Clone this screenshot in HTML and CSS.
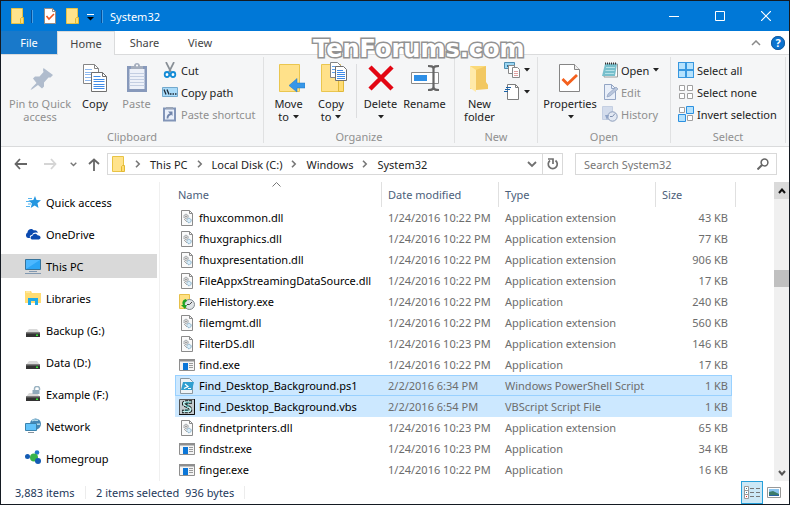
FILE: index.html
```html
<!DOCTYPE html>
<html lang="en">
<head>
<meta charset="utf-8">
<title>System32</title>
<link rel="stylesheet" href="styles.css">
</head>
<body>
<svg class="defs" aria-hidden="true">
  <symbol id="folder" viewBox="0 0 14 16">
    <path d="M.5.5h11v15H.5z" fill="#ffe38c" stroke="#e8c344"/>
    <path d="M10.500 9.500h2v6h-3v-5z" fill="#ffdc72" stroke="#e2b932"/>
  </symbol>
  <symbol id="dll" viewBox="0 0 16 16">
    <path d="M2.500.5h8l3 3v12h-11z" fill="#fafafa" stroke="#8b8b8b"/>
    <path d="M10.500.5v3h3" fill="none" stroke="#8b8b8b"/>
    <circle cx="7" cy="6.500" r="2.200" fill="#ddd" stroke="#858d93" stroke-dasharray="1 .6"/>
    <circle cx="10" cy="10.500" r="2.200" fill="#d9ecf7" stroke="#6f9dba" stroke-dasharray="1 .6"/>
    <circle cx="7" cy="6.500" r=".7" fill="#777"/>
    <path d="M5 9l3 3" stroke="#aaa"/>
  </symbol>
  <symbol id="exe" viewBox="0 0 16 16">
    <path d="M.5 2.500h15v11H.5z" fill="#f4f4f4" stroke="#8e8e8e"/>
    <path d="M0 2h16v2.500H0z" fill="#8e8e8e"/>
    <path d="M4 6h5v7H4z" fill="#0b76d8"/>
    <path d="M10 6.500h4M10 8.500h4M10 10.500h4" stroke="#9a9a9a"/>
  </symbol>
  <symbol id="drive" viewBox="0 0 16 16">
    <path d="M4 7h8l3 4H1z" fill="#d9d9d9"/>
    <path d="M1 10.500h14v4.500H1z" fill="#333"/>
    <path d="M1 10.500h14v1H1z" fill="#777"/>
    <path d="M11 12.500h2v1.500h-2z" fill="#39e639"/>
  </symbol>
  <symbol id="down" viewBox="0 0 6 4"><path d="M0 0h6L3 3.500z" fill="#222"/></symbol>
  <symbol id="chev" viewBox="0 0 6 8"><path d="M1 .8L4.200 4 1 7.200" fill="none" stroke="#777" stroke-width="1.600"/></symbol>
</svg>

<main class="window">
  <header class="titlebar">
    <svg class="tb-folder" width="14" height="16"><use href="#folder"/></svg>
    <i class="tb-sep"></i>
    <svg class="tb-check" width="12" height="16" viewBox="0 0 12 16"><path d="M.5.5h8l3 3v12H.5z" fill="#fff" stroke="#9a8d84"/><path d="M8.500.5v3h3" fill="none" stroke="#9a8d84"/><path d="M2.500 8l2.500 3 5-5" fill="none" stroke="#f0541e" stroke-width="1.600"/></svg>
    <svg class="tb-folder" width="14" height="16"><use href="#folder"/></svg>
    <svg class="tb-more" width="7" height="7" viewBox="0 0 7 7"><path d="M0 .5h7" stroke="#fff"/><path d="M0 3h7L3.500 6.500z" fill="#000"/></svg>
    <i class="tb-sep"></i>
    <h1 class="title">System32</h1>
    <div class="caption">
      <button aria-label="Minimize"><svg width="10" height="10"><path d="M0 5.500h10" stroke="#fff"/></svg></button>
      <button aria-label="Maximize"><svg width="10" height="10"><path d="M.5.5h9v9h-9z" fill="none" stroke="#fff"/></svg></button>
      <button aria-label="Close"><svg width="10" height="10"><path d="M0 0l10 10M10 0L0 10" stroke="#fff" stroke-width="1.200"/></svg></button>
    </div>
  </header>

  <nav class="tabs">
    <button class="tab tab-file">File</button>
    <button class="tab tab-home">Home</button>
    <button class="tab">Share</button>
    <button class="tab">View</button>
    <div class="tabs-end">
      <button aria-label="Minimize the Ribbon"><svg width="10" height="6"><path d="M1 5l4-4 4 4" fill="none" stroke="#8a8a8a" stroke-width="1.500"/></svg></button>
      <button class="help" aria-label="Help">?</button>
    </div>
    <div class="watermark">TenForums.com</div>
  </nav>

  <section class="ribbon">
    <div class="group g-clipboard">
      <div class="tools">
        <button class="big off w-pin">
          <svg width="32" height="32" viewBox="0 0 32 32"><path d="M19.500 6L29 13l-2.500 2.500-2 0-4.500 5v4L18 26.500l-4-3.500L8.500 27 6.500 28 8 25.500 12.500 21 9 16.500l2-2h4.500l4-4.500-.5-2z" fill="#b0bccd"/></svg>
          <span>Pin to Quick<br>access</span></button>
        <button class="big w-copy">
          <svg width="32" height="32" viewBox="0 0 32 32"><g fill="#fff" stroke="#858585"><path d="M4.500 2.500h11l4 4v15h-15z"/><path d="M15.500 2.500v4h4" fill="none"/></g><path d="M6 7.500h7M6 10.500h11M6 12.500h11M6 15.500h11M6 18.500h11" stroke="#8db8ef"/><g fill="#fff" stroke="#707070"><path d="M12.500 10.500h11l4 4v15h-15z"/><path d="M23.500 10.500v4h4" fill="none"/></g><path d="M14.500 14.500h7M14.500 17.500h11M14.500 19.500h11M14.500 22.500h11M14.500 24.500h11M14.500 26.500h11" stroke="#3f8be8"/></svg>
          <span>Copy</span></button>
        <button class="big off w-paste">
          <svg width="32" height="32" viewBox="0 0 32 32"><path d="M6 4h20v26H6z" fill="#8799bb"/><path d="M8.500 7h15v20h-15z" fill="#edf1f9"/><path d="M8.500 11.500h15M8.500 14.500h15M8.500 17.500h15M8.500 20.500h15M8.500 23.500h15" stroke="#c3cee2"/><path d="M10 7V4h3c0-4 6-4 6 0h3v3z" fill="#a5aebd"/><circle cx="16" cy="3.500" r="1" fill="#fff"/></svg>
          <span>Paste</span></button>
        <div class="smalls">
          <button class="small"><svg width="16" height="16" viewBox="0 0 16 16"><path d="M4 0l5 10M12 0L7 10" stroke="#888f96" stroke-width="1.700"/><g fill="#fff" stroke="#138bd6" stroke-width="1.800"><ellipse cx="5" cy="12.500" rx="2.300" ry="2.500"/><ellipse cx="11" cy="12.500" rx="2.300" ry="2.500"/></g></svg>Cut</button>
          <button class="small"><svg width="16" height="16" viewBox="0 0 16 16"><path d="M.5 3.500h15v9H.5z" fill="#a9dbf9" stroke="#73a9cd"/><path d="M2 5.500l2 5M5 5.500l2 5" stroke="#1e2b38" stroke-width="1.300"/><path d="M8 10h1.500M10.500 10H12M13 10h1.500" stroke="#1e2b38" stroke-width="1.500"/></svg>Copy path</button>
          <button class="small off"><svg width="16" height="16" viewBox="0 0 16 16"><path d="M2 2.500h11v12H2z" fill="#eaf0fa" stroke="#8295b8" stroke-width="2"/><path d="M4 3V1h7v2z" fill="#9aa5b7"/><path d="M5.500 12.500c0-3 1-4 3.500-4.500" fill="none" stroke="#7185aa" stroke-width="1.800"/><path d="M6 5.500h4.500V10z" fill="#7185aa"/></svg>Paste shortcut</button>
        </div>
      </div>
      <div class="caption-text">Clipboard</div>
    </div>

    <div class="group g-organize">
      <div class="tools">
        <button class="big w-move">
          <svg width="32" height="32" viewBox="0 0 32 32"><path d="M6.500 2.500h20v27h-20z" fill="#ffe18a" stroke="#eac64f"/><path d="M16 23.500l8-7v4.500h8v5h-8V30z" fill="#3797e8" stroke="#1c75c6" stroke-width=".5"/></svg>
          <span>Move<br>to <svg class="dd" width="6" height="4"><use href="#down"/></svg></span></button>
        <button class="big w-copyto">
          <svg width="32" height="32" viewBox="0 0 32 32"><path d="M6.500 2.500h19v27h-19z" fill="#ffe18a" stroke="#eac64f"/><path d="M23.500 18.500h5v11h-5z" fill="#ffdc72" stroke="#e0b93a"/><path d="M15.500.5h7l3 3v12h-10z" fill="#fff" stroke="#858585"/><path d="M17 4.500h4M17 7.500h5M17 10.500h4" stroke="#5e9fe9"/><path d="M20.500 4.500h8l3 3v11h-11z" fill="#fff" stroke="#707070"/><path d="M22 8.500h6M22 10.500h8M22 12.500h8M22 14.500h8M22 16.500h8" stroke="#3f8be8"/></svg>
          <span>Copy<br>to <svg class="dd" width="6" height="4"><use href="#down"/></svg></span></button>
        <i class="split"></i>
        <button class="big w-delete">
          <svg width="32" height="32" viewBox="0 0 32 32"><path d="M5 5l22 22M27 5L5 27" stroke="#e30613" stroke-width="4.500"/></svg>
          <span>Delete<br><svg class="dd" width="6" height="4"><use href="#down"/></svg></span></button>
        <button class="big w-rename">
          <svg width="32" height="32" viewBox="0 0 32 32"><path d="M2.500 10.500h27v11h-27z" fill="#fff" stroke="#8a8a8a"/><path d="M5 13h13v6H5z" fill="#2e8fe6"/><path d="M24.500 5v23M19 4c3 0 5.500 0 5.500 3 0-3 2.500-3 5.500-3M19 28c3 0 5.500 0 5.500-3 0 3 2.500 3 5.500 3" fill="none" stroke="#666" stroke-width="2.200"/></svg>
          <span>Rename</span></button>
      </div>
      <div class="caption-text">Organize</div>
    </div>

    <div class="group g-new">
      <div class="tools">
        <button class="big w-new">
          <svg width="32" height="32" viewBox="0 0 32 32"><path d="M6 4h16v18l2 1v4H6z" fill="#fbd978"/><path d="M12 8l10-4v16l2 3v4l-12 1z" fill="#f2c862"/><path d="M6 4l6 4v22l-6-4z" fill="#ffeaa9"/></svg>
          <span>New<br>folder</span></button>
        <div class="smalls">
          <button class="small" aria-label="New item"><svg width="16" height="16" viewBox="0 0 16 16"><path d="M.5.5h10v6H.5z" fill="#9ad5f2" stroke="#4d8db0"/><path d="M3 3h2v2H3z" fill="#2c6e96"/><path d="M4.500 3.500h6v8h-6z" fill="#fff" stroke="#888"/><path d="M8.500 5.500h5l2 2v8h-7z" fill="#fff" stroke="#888"/><path d="M10 9.500h4M10 11.500h4M10 13.500h4" stroke="#e2a1a1"/></svg><svg class="dd" width="6" height="4"><use href="#down"/></svg></button>
          <button class="small" aria-label="Easy access"><svg width="16" height="16" viewBox="0 0 16 16"><path d="M3.500.5h8l3 3v12h-11z" fill="#fff" stroke="#7d7d7d"/><path d="M11.500.5v3h3" fill="none" stroke="#7d7d7d"/><path d="M2 3.500h5M1 5.500h5M0 7.500h4" stroke="#1b63a8" stroke-width="1.200"/></svg><svg class="dd" width="6" height="4"><use href="#down"/></svg></button>
        </div>
      </div>
      <div class="caption-text">New</div>
    </div>

    <div class="group g-open">
      <div class="tools">
        <button class="big w-props">
          <svg width="32" height="32" viewBox="0 0 32 32"><path d="M5.500 2.500h15l5 5v22h-20z" fill="#fff" stroke="#858585"/><path d="M20.500 2.500v5h5" fill="#eee" stroke="#858585"/><path d="M8.500 17l5 5L23 13" fill="none" stroke="#f4601d" stroke-width="2.800"/></svg>
          <span>Properties<br><svg class="dd" width="6" height="4"><use href="#down"/></svg></span></button>
        <div class="smalls">
          <button class="small"><svg width="16" height="16" viewBox="0 0 16 16"><path d="M4 2h11.500v13H2z" fill="#fff" stroke="#999"/><path d="M3 2h12l-2 12H0z" fill="#78bfcc"/><path d="M4 5.500h9M3.500 8.500h9M3 11.500h9" stroke="#b6e2e8"/><path d="M3 1.500h12" stroke="#333" stroke-width="2" stroke-dasharray="1 1"/></svg>Open <svg class="dd" width="6" height="4"><use href="#down"/></svg></button>
          <button class="small off"><svg width="16" height="16" viewBox="0 0 16 16"><path d="M2.500.5h7l4 4v11h-11z" fill="#e9eff9" stroke="#93a5c4"/><path d="M9.500.5v4h4" fill="none" stroke="#93a5c4"/><path d="M5 13l1-3 8-7 2 2-8 7z" fill="#b9c6dc" stroke="#8fa1c0" stroke-width=".7"/></svg>Edit</button>
          <button class="small off"><svg width="16" height="16" viewBox="0 0 16 16"><path d="M.5.5h10v13H.5z" fill="#d3dcec" stroke="#c4cfe2"/><circle cx="10.500" cy="10.500" r="4.700" fill="#e2e8f2" stroke="#8b9cba"/><path d="M10.500 10.500L13 7.500M10.500 10.500H8" stroke="#7f90b0"/><path d="M3 9h4l-2 5z" fill="#8fa3c6"/></svg>History</button>
        </div>
      </div>
      <div class="caption-text">Open</div>
    </div>

    <div class="group g-select">
      <div class="tools">
        <div class="smalls">
          <button class="small"><svg width="16" height="16"><path d="M0 0h16v16H0z" fill="#3797df"/><path d="M1 1h6v6H1zM9 1h6v6H9zM1 9h6v6H1zM9 9h6v6H9z" fill="#b5e2fd"/></svg>Select all</button>
          <button class="small"><svg width="16" height="16"><path d="M1.500 1.500h5v5h-5zM9.500 1.500h5v5h-5zM1.500 9.500h5v5h-5zM9.500 9.500h5v5h-5z" fill="#fff" stroke="#a0a0a0"/></svg>Select none</button>
          <button class="small"><svg width="16" height="16"><path d="M1.500 1.500h5v5h-5zM9.500 9.500h5v5h-5z" fill="#fff" stroke="#a0a0a0"/><path d="M8.500.5h7v7h-7zM.5 8.500h7v7h-7z" fill="#b5e2fd" stroke="#2b90e0"/></svg>Invert selection</button>
        </div>
      </div>
      <div class="caption-text">Select</div>
    </div>
  </section>

  <section class="addressrow">
    <button class="nav" aria-label="Back"><svg width="13" height="12"><path d="M6 1L1.500 6 6 11M1.500 6H13" fill="none" stroke="#666" stroke-width="1.800"/></svg></button>
    <button class="nav nav-fwd" aria-label="Forward"><svg width="13" height="12"><path d="M7 1l4.500 5L7 11M11.500 6H0" fill="none" stroke="#d5d5d5" stroke-width="1.800"/></svg></button>
    <button class="nav nav-recent" aria-label="Recent locations"><svg width="7" height="5"><path d="M.7.8l2.800 2.700L6.300.8" fill="none" stroke="#777" stroke-width="1.400"/></svg></button>
    <button class="nav nav-up" aria-label="Up"><svg width="12" height="13"><path d="M1 6l5-4.500L11 6M6 1.500V13" fill="none" stroke="#666" stroke-width="1.800"/></svg></button>
    <div class="address">
      <svg width="14" height="16"><use href="#folder"/></svg>
      <svg class="sep" width="6" height="8"><use href="#chev"/></svg><a href="#">This PC</a>
      <svg class="sep" width="6" height="8"><use href="#chev"/></svg><a href="#">Local Disk (C:)</a>
      <svg class="sep" width="6" height="8"><use href="#chev"/></svg><a href="#">Windows</a>
      <svg class="sep" width="6" height="8"><use href="#chev"/></svg><a href="#">System32</a>
      <button class="drop" aria-label="Previous locations"><svg width="10" height="7"><path d="M1 1l4 4 4-4" fill="none" stroke="#707070" stroke-width="1.800"/></svg></button>
      <button class="refresh" aria-label="Refresh"><svg width="12" height="12"><path d="M3 2.500A4.500 4.500 0 1 0 8.500 2.500" fill="none" stroke="#707070" stroke-width="1.700"/><path d="M1 1h5v5" fill="none" stroke="#707070" stroke-width="1.700"/></svg></button>
    </div>
    <label class="search">
      <input type="text" placeholder="Search System32" aria-label="Search System32">
      <svg width="12" height="12"><circle cx="7.500" cy="4.500" r="3.400" fill="none" stroke="#666" stroke-width="1.500"/><path d="M5 7l-4.500 4.500" stroke="#666" stroke-width="2"/></svg>
    </label>
  </section>

  <section class="content">
    <nav class="side">
      <a href="#"><svg width="16" height="16" viewBox="0 0 16 16"><path d="M10 2l1.500 4 4.500.3-3.500 3 1 4.700-3.800-2.500-4 2.500 1.200-4.600L3.500 6.500 8.300 6z" fill="#2496e0"/><path d="M3 4.500h4M1 7.500h4M3 10h3M1 12.500h4" stroke="#56b4ee"/></svg>Quick access</a>
      <a href="#"><svg width="16" height="16" viewBox="0 0 16 16"><path d="M3 12a3 3 0 0 1-.5-5.500C2.500 3 7 1.500 9 4.500c2-.5 3.500.5 3.800 2.500-3-1-5 0-5.500 1.800C5 9 4.500 10.500 5 12z" fill="#0b4ab0"/><path d="M7 13.500c-2-.5-2-3.500.5-3.700.5-2.500 4-2.800 5-.5 3.500 0 4 3.500 1.500 4.200z" fill="#0b4ab0"/></svg>OneDrive</a>
      <a href="#" class="current"><svg width="16" height="16" viewBox="0 0 16 16"><path d="M.5 1.500h15v10H.5z" fill="#4db8ff" stroke="#35739b"/><path d="M1 11L15 2v9z" fill="#2ca5f5"/><path d="M4 13.500h8M0 15.500h16" stroke="#8198b0"/></svg>This PC</a>
      <a href="#"><svg width="16" height="16" viewBox="0 0 16 16"><path d="M0 1h6l1 2h9v10H0z" fill="#ffdc72"/><path d="M1 2h4" stroke="#fff3c9"/><path d="M3 8h10v7h-3v-4H6v4H3z" fill="#1ea9e8"/></svg>Libraries</a>
      <a href="#"><svg width="16" height="16"><use href="#drive"/></svg>Backup (G:)</a>
      <a href="#"><svg width="16" height="16"><use href="#drive"/></svg>Data (D:)</a>
      <a href="#"><svg width="16" height="16" viewBox="0 0 16 16"><use href="#drive" width="16" height="16"/><path d="M9.500 4V2.500a2.500 2 0 0 1 5 0V4" fill="none" stroke="#9bb3c2" stroke-width="1.500"/><path d="M7.500 4h7v4h-7z" fill="#8fa9ba"/></svg>Example (F:)</a>
      <a href="#"><svg width="16" height="16" viewBox="0 0 16 16"><circle cx="10.500" cy="6" r="5.500" fill="#4588b5"/><path d="M7 3c2-2 4 0 6-1M8 6c3-1 4 1 7 0" stroke="#b7dbe8" fill="none" stroke-width="1.500"/><path d="M.5 5.500h11v7H.5z" fill="#62c3fa" stroke="#3b83ad"/><path d="M3 14.500h6" stroke="#86929d"/></svg>Network</a>
      <a href="#"><svg width="16" height="16" viewBox="0 0 16 16"><circle cx="2.500" cy="6.500" r="2.500" fill="#135bb4"/><circle cx="12" cy="2.500" r="2.300" fill="#2277c8"/><circle cx="9" cy="7.500" r="4" fill="#37b34a"/><circle cx="13" cy="11" r="3" fill="#135bb4"/></svg>Homegroup</a>
    </nav>

    <div class="listing">
      <table>
        <colgroup><col class="c-name"><col class="c-date"><col class="c-type"><col class="c-size"></colgroup>
        <thead><tr><th>Name<svg class="sort" width="9" height="5"><path d="M.5 4.500l4-4 4 4" fill="none" stroke="#777"/></svg></th><th>Date modified</th><th>Type</th><th>Size</th></tr></thead>
        <tbody>
          <tr><td><svg width="16" height="16"><use href="#dll"/></svg>fhuxcommon.dll</td><td>1/24/2016 10:22 PM</td><td>Application extension</td><td>43 KB</td></tr>
          <tr><td><svg width="16" height="16"><use href="#dll"/></svg>fhuxgraphics.dll</td><td>1/24/2016 10:22 PM</td><td>Application extension</td><td>77 KB</td></tr>
          <tr><td><svg width="16" height="16"><use href="#dll"/></svg>fhuxpresentation.dll</td><td>1/24/2016 10:22 PM</td><td>Application extension</td><td>906 KB</td></tr>
          <tr><td><svg width="16" height="16"><use href="#dll"/></svg>FileAppxStreamingDataSource.dll</td><td>1/24/2016 10:22 PM</td><td>Application extension</td><td>17 KB</td></tr>
          <tr><td><svg width="16" height="16" viewBox="0 0 16 16"><path d="M.5.5h10v14H.5z" fill="#ffe083" stroke="#e6c04a"/><circle cx="10.500" cy="10.500" r="5" fill="#dfe3e6" stroke="#7e868c"/><path d="M10.500 10.500L13 8M10.500 10.500H8" stroke="#444"/><path d="M7 5c-4 1-4 4-3 6l-2 0 4 4 2-4H6c-1-2 0-3 2-4z" fill="#1fa324"/></svg>FileHistory.exe</td><td>1/24/2016 10:22 PM</td><td>Application</td><td>240 KB</td></tr>
          <tr><td><svg width="16" height="16"><use href="#dll"/></svg>filemgmt.dll</td><td>1/24/2016 10:22 PM</td><td>Application extension</td><td>560 KB</td></tr>
          <tr><td><svg width="16" height="16"><use href="#dll"/></svg>FilterDS.dll</td><td>1/24/2016 10:23 PM</td><td>Application extension</td><td>146 KB</td></tr>
          <tr><td><svg width="16" height="16"><use href="#exe"/></svg>find.exe</td><td>1/24/2016 10:22 PM</td><td>Application</td><td>17 KB</td></tr>
          <tr class="sel focus"><td><svg width="16" height="16" viewBox="0 0 16 16"><path d="M1.500.5h9l3 3v12h-12z" fill="#eef3f6" stroke="#8b979f"/><path d="M4 4h11l-2 8H2z" fill="#2f9fd0"/><path d="M6 6l3 2.500L5 10.500M9 10.500h3" fill="none" stroke="#fff" stroke-width="1.200"/></svg>Find_Desktop_Background.ps1</td><td>2/2/2016 6:34 PM</td><td>Windows PowerShell Script</td><td>1 KB</td></tr>
          <tr class="sel"><td><svg width="16" height="16" viewBox="0 0 16 16"><path d="M.5.5h15v15H.5z" fill="#c3cbcf" stroke="#555"/><path d="M15.500 0v15.500H0" fill="none" stroke="#111"/><path d="M13 3H7C4 3 4 6 6.500 6.500l3 1.500C12.500 9.500 12 12.500 9 12.500H3" fill="none" stroke="#111" stroke-width="3.500" stroke-dasharray="3 .7"/><path d="M12.500 3H7C4 3 4 6 6.500 6.500l3 1.500C12.500 9.500 12 12.500 9 12.500H3.500" fill="none" stroke="#bff5f5" stroke-width="1.700"/><path d="M7 4h3M7 7h3M6 11h3" stroke="#157b7b"/></svg>Find_Desktop_Background.vbs</td><td>2/2/2016 6:54 PM</td><td>VBScript Script File</td><td>1 KB</td></tr>
          <tr><td><svg width="16" height="16"><use href="#dll"/></svg>findnetprinters.dll</td><td>1/24/2016 10:23 PM</td><td>Application extension</td><td>65 KB</td></tr>
          <tr><td><svg width="16" height="16"><use href="#exe"/></svg>findstr.exe</td><td>1/24/2016 10:23 PM</td><td>Application</td><td>34 KB</td></tr>
          <tr><td><svg width="16" height="16"><use href="#exe"/></svg>finger.exe</td><td>1/24/2016 10:22 PM</td><td>Application</td><td>16 KB</td></tr>
        </tbody>
      </table>
    </div>

    <div class="scrollbar">
      <button class="sb-up" aria-label="Scroll up"><svg width="8" height="6"><path d="M1 5l3-3.500L7 5" fill="none" stroke="#111" stroke-width="2"/></svg></button>
      <div class="track"><div class="thumb"></div></div>
      <button aria-label="Scroll down"><svg width="8" height="6"><path d="M1 1l3 3.500L7 1" fill="none" stroke="#555" stroke-width="2"/></svg></button>
    </div>
  </section>

  <footer class="status">
    <span class="count">3,883 items</span>
    <span class="picked">2 items selected</span>
    <span class="bytes">936 bytes</span>
    <button class="view view-on" aria-label="Details view"><svg width="16" height="13"><path d="M.5.5h4v12h-4zM.5 4.500h4M.5 8.500h4" fill="#fff" stroke="#999"/><path d="M2 2h1v1H2zM2 6h1v1H2z" fill="#38a"/><path d="M2 10h1v1H2z" fill="#e22"/><path d="M6 2.500h4M12 2.500h4M6 6.500h4M12 6.500h4M6 10.500h4M12 10.500h4" stroke="#777"/></svg></button>
    <button class="view" aria-label="Large icons view"><svg width="14" height="11"><path d="M.5.5h13v10H.5z" fill="#fff" stroke="#999"/><path d="M2 2h10v7H2z" fill="#8cc5ef"/><path d="M2 5l4-1 6 3v2H2z" fill="#3d7c6a"/><path d="M2 8h10v1H2z" fill="#2a63a5"/></svg></button>
  </footer>
</main>
</body>
</html>
```
FILE: styles.css
```css
* { box-sizing: border-box; }
body {
  margin: 0;
  font: 11px/13px "Noto Sans", "Open Sans", sans-serif;
  color: #222;
  background: #fff;
}
button {
  font: inherit;
  color: inherit;
  background: none;
  border: 0;
  padding: 0;
  display: flex;
  align-items: center;
  justify-content: center;
}
a { color: inherit; text-decoration: none; }
svg { flex: none; }
.defs { display: none; }

.window {
  min-height: 100vh;
  border: 1px solid #141a22;
  display: flex;
  flex-direction: column;
}

/* Title bar */
.titlebar {
  height: 30px;
  display: flex;
  align-items: center;
  padding-left: 10px;
  background: #0078d7;
  color: #fff;
}
.tb-sep { width: 2px; height: 13px; margin: 0 11px 0 6px; background: #4b9fe2; border-left: 1px solid #05509a; }
.tb-check { margin-right: 10px; }
.tb-more { margin: 2px 1px 0 7px; }
.title { margin: 0 auto 0 -4px; font-size: 11px; font-weight: 400; }
.caption { display: flex; }
.caption button { width: 46px; height: 30px; }

/* Tabs */
.tabs {
  position: relative;
  height: 24px;
  display: flex;
  border-bottom: 1px solid #dadbdc;
}
.tab { width: 56px; height: 23px; color: #444; }
.tab-file { background: #1979ca; color: #fff; }
.tab-home {
  width: 58px;
  height: 24px;
  background: #f5f6f7;
  border: solid #dadbdc;
  border-width: 1px 1px 0;
}
.tab-home + .tab { width: 59px; }
.tab-home ~ .tab + .tab { width: 52px; }
.tabs-end { margin-left: auto; display: flex; align-items: center; gap: 10px; padding-right: 4px; }
.help { width: 14px; height: 14px; border-radius: 50%; background: #0a73d0; color: #fff; font-weight: 700; outline: 1px solid #175a9b; outline-offset: -1px; }
.watermark {
  position: absolute;
  left: 312px;
  top: 5px;
  font: 700 24px/26px "DejaVu Sans", sans-serif;
  color: #fff;
  -webkit-text-stroke: 3px #929292;
  paint-order: stroke fill;
}

/* Ribbon */
.ribbon {
  display: flex;
  height: 92px;
  padding-top: 2px;
  background: #f5f6f7;
  border-bottom: 1px solid #dadbdc;
}
.group { height: 86px; display: flex; flex-direction: column; border-right: 1px solid #e0e1e2; }
.g-clipboard { width: 263px; }
.g-organize { width: 191px; }
.g-new { width: 83px; }
.g-open { width: 133px; }
.g-select { width: 115px; }
.tools { flex: 1; display: flex; }
.caption-text { height: 13px; text-align: center; color: #909090; }
.big { flex-direction: column; justify-content: flex-start; padding-top: 5px; }
.big span { margin-top: 3px; }
.off { color: #8f8f8f; }
.dd { margin-left: 1px; vertical-align: 2px; }
.w-pin { width: 78px; }
.w-copy { width: 32px; }
.w-paste { width: 51px; }
.w-move { width: 49px; }
.w-copyto { width: 36px; }
.split { width: 1px; height: 54px; margin: 7px 0 0 7px; background: #dcdddf; }
.w-delete { width: 47px; }
.w-rename { width: 41px; }
.w-new { width: 49px; }
.w-props { width: 64px; }
.smalls { display: flex; flex-direction: column; padding-top: 2px; }
.small { height: 22px; justify-content: flex-start; gap: 3px; white-space: nowrap; }
.small .dd { margin: 0 0 0 1px; }
.g-select .smalls { padding-left: 7px; }

/* Address bar */
.addressrow { display: flex; align-items: center; padding: 6px 12px 7px 13px; }
.nav-fwd { margin-left: 17px; }
.nav-recent { margin-left: 13px; }
.nav-up { margin: 0 7px 0 11px; }
.address {
  flex: 456 1 456px;
  height: 22px;
  display: flex;
  align-items: center;
  padding-left: 4px;
  border: 1px solid #d9d9d9;
}
.sep { margin: 0 9px; }
.drop { width: 20px; height: 20px; margin-left: auto; }
.refresh { width: 20px; height: 20px; border-left: 1px solid #d9d9d9; }
.search {
  flex: 202 1 202px;
  height: 22px;
  display: flex;
  align-items: center;
  margin-left: 12px;
  padding: 0 7px 0 8px;
  border: 1px solid #d9d9d9;
}
.search input { flex: 1; min-width: 0; font: inherit; padding: 0; border: 0; outline: 0; }
.search input::placeholder { color: #777; }

/* Folder tree and file list */
.content { flex: 1; display: flex; }
.side { width: 159px; padding: 8px 2px 0 0; border-right: 1px solid #f0f0f0; display: flex; flex-direction: column; gap: 8px; color: #000; }
.side a { height: 24px; display: flex; align-items: center; gap: 5px; padding-left: 24px; }
.side .current { background: #d9d9d9; }
.listing { flex: 1; padding-left: 15px; }
table { border-collapse: collapse; table-layout: fixed; width: 557px; white-space: nowrap; }
.c-name { width: 207px; }
.c-date { width: 117px; }
.c-type { width: 157px; }
.c-size { width: 76px; }
th {
  position: relative;
  height: 25px;
  padding: 0 0 0 6px;
  text-align: left;
  font-weight: 400;
  color: #4c607a;
}
th:first-child { padding-left: 3px; }
th::after { content: ""; position: absolute; top: 0; right: 0; width: 1px; height: 25px; background: #e0e0e0; }
th:last-child::after { right: -4px; }
.sort { position: absolute; top: 0; left: 97px; }
td { height: 21px; padding: 0 0 0 6px; line-height: 21px; color: #6d6d6d; }
td:first-child { padding-left: 4px; color: #000; }
td:last-child { padding-right: 4px; text-align: right; }
td svg { margin-right: 4px; vertical-align: -4px; }
.sel { background: #cce8ff; }
.focus { outline: 1px solid #99d1ff; outline-offset: -1px; }
.scrollbar { width: 15px; display: flex; flex-direction: column; background: #f0f0f0; }
.scrollbar button { height: 17px; }
.sb-up { background: #dadada; }
.track { flex: 1; display: flex; flex-direction: column; }
.track::before { content: ""; flex: 71; }
.track::after { content: ""; flex: 177; }
.thumb { height: 17px; background: #c0c0c0; }

/* Status bar */
.status { height: 23px; display: flex; align-items: center; padding: 0 4px 0 14px; white-space: nowrap; color: #1e395b; }
.count { width: 70px; }
.picked { width: 100px; padding-left: 10px; border-left: 1px solid #ececec; }
.bytes { width: 60px; border-right: 1px solid #ececec; margin-right: auto; }
.view { width: 22px; height: 23px; }
.view-on { background: #cce8f6; border: 1px solid #26a0da; }
```
